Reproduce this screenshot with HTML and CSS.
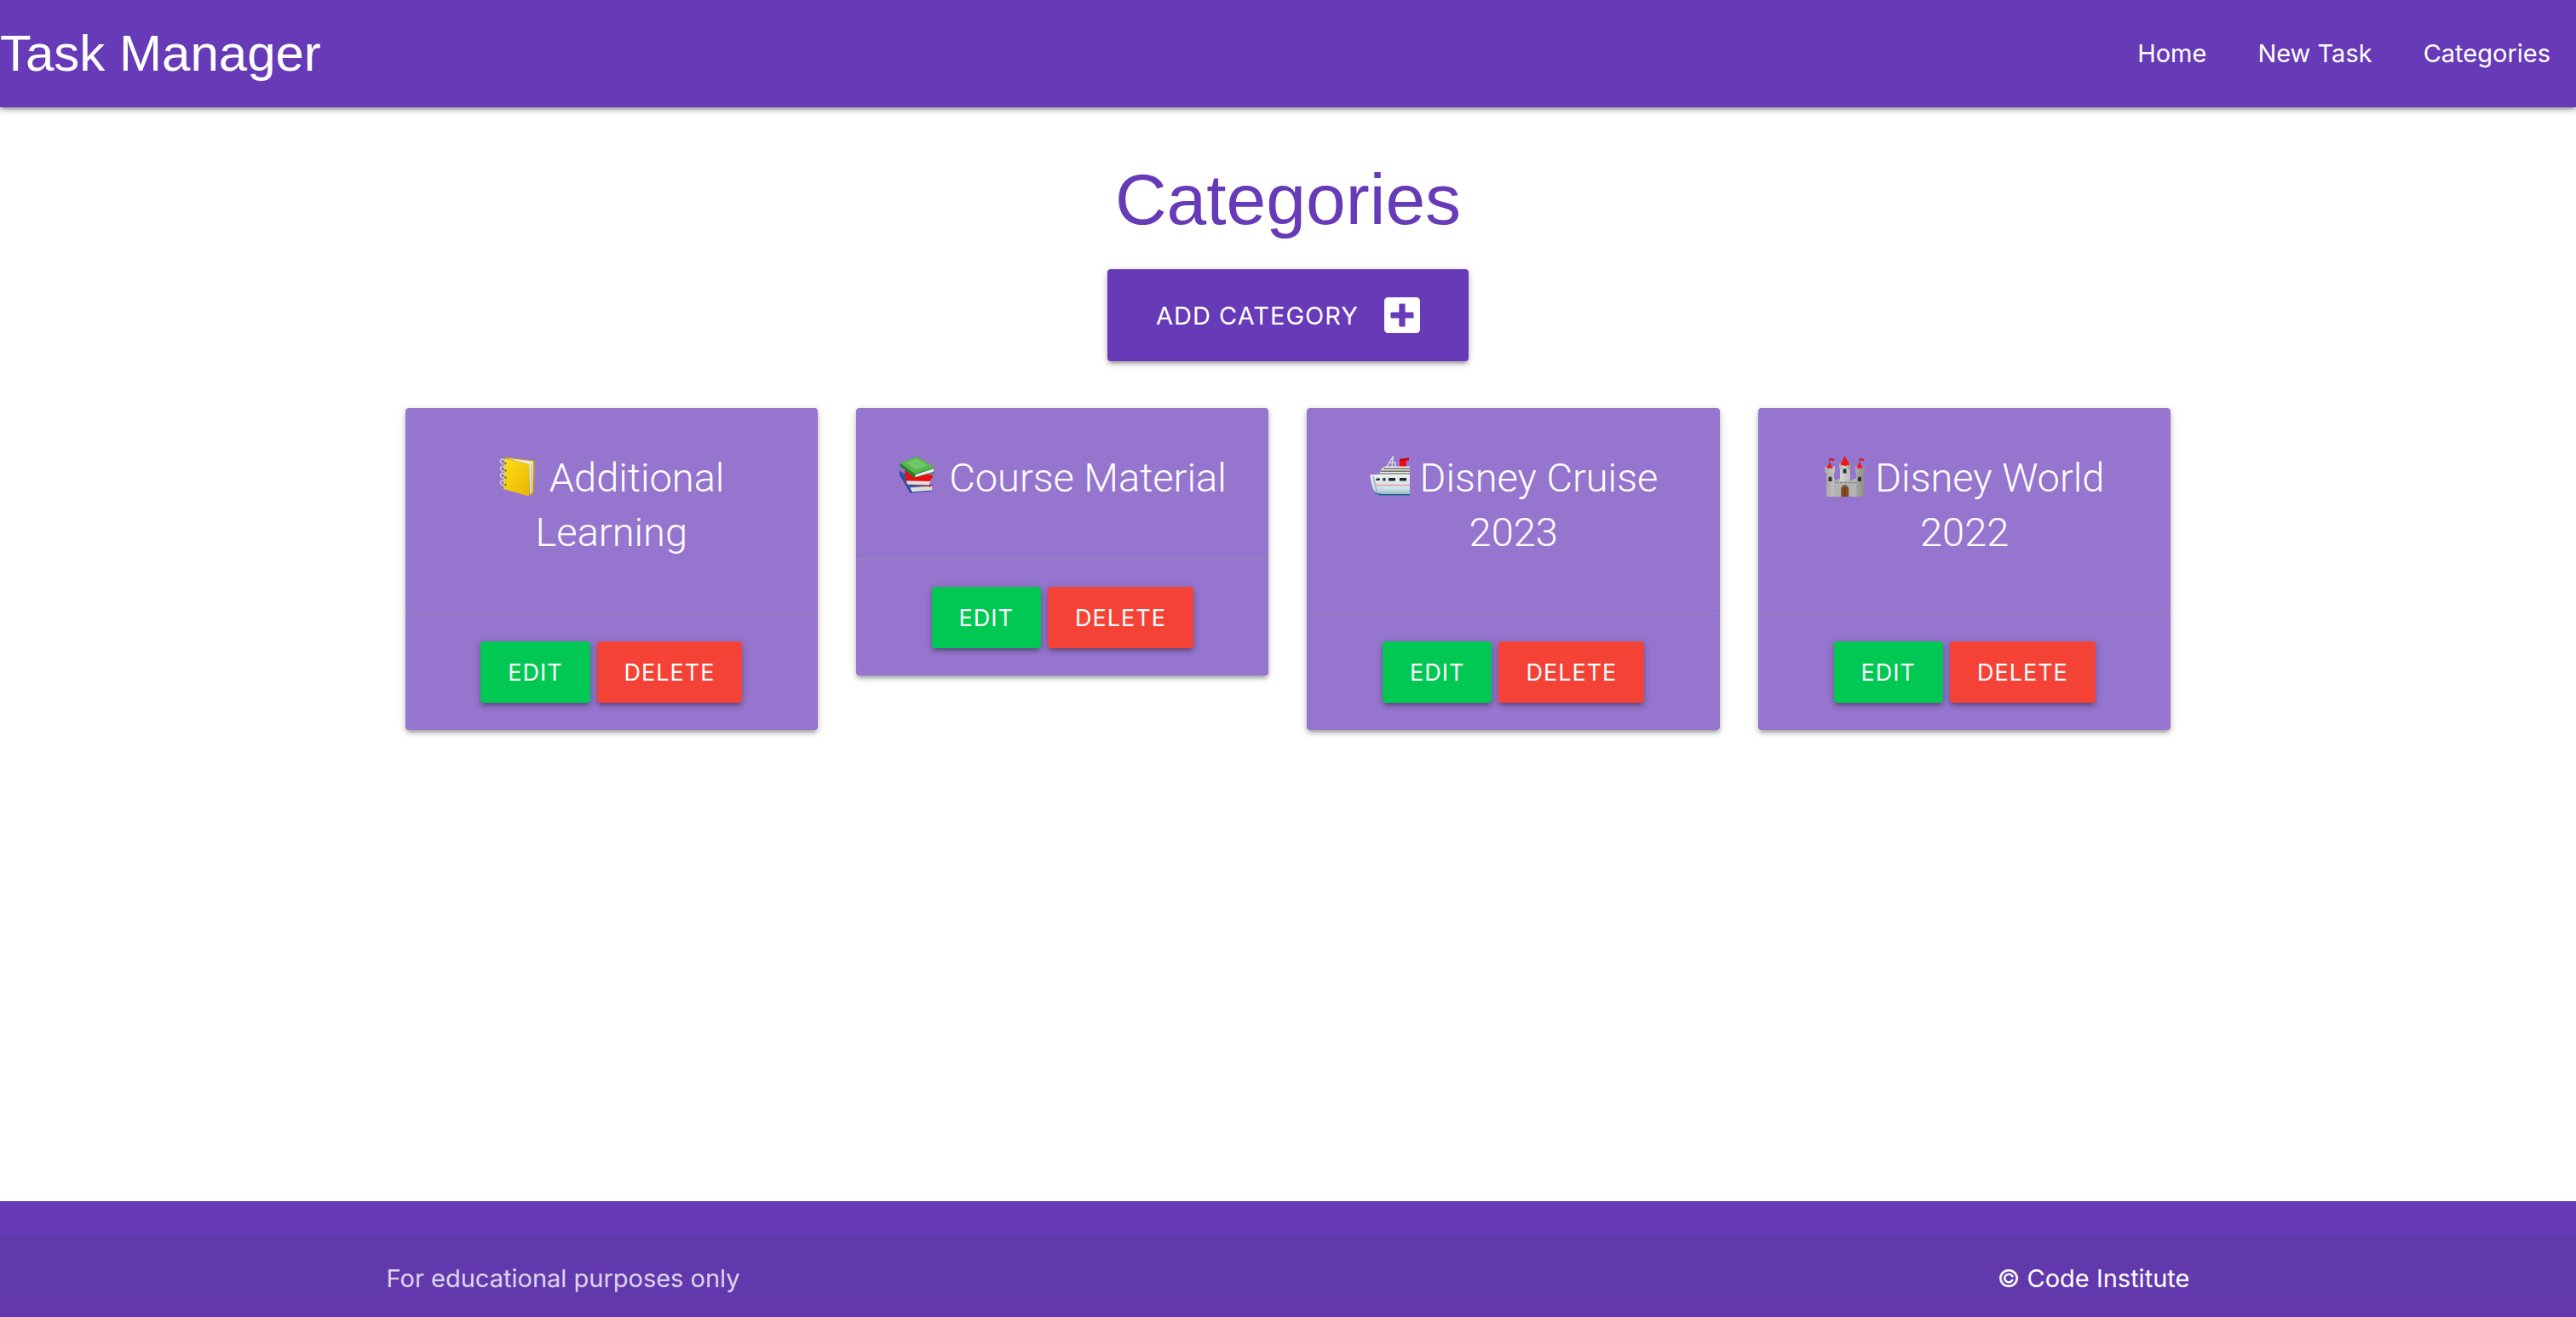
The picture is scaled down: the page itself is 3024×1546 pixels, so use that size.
FILE: index.html
```html
<!DOCTYPE html>
<html lang="en">
<head>
  <meta charset="utf-8">
  <meta name="viewport" content="width=device-width, initial-scale=1">
  <title>Task Manager</title>
  <link rel="stylesheet" href="styles.css">
</head>
<body>
  <header class="navbar">
    <a class="brand" href="#">Task Manager</a>
    <nav class="nav-links">
      <a href="#">Home</a>
      <a href="#">New Task</a>
      <a href="#">Categories</a>
    </nav>
  </header>

  <main class="container">
    <h1 class="page-title">Categories</h1>
    <button class="btn btn-large" type="button">Add Category
      <svg class="btn-icon" viewBox="0 0 42 42" aria-hidden="true"><path fill="currentColor" fill-rule="evenodd" d="M4.500 0h33A4.500 4.500 0 0 1 42 4.500v33a4.500 4.500 0 0 1-4.500 4.500h-33A4.500 4.500 0 0 1 0 37.500v-33A4.500 4.500 0 0 1 4.500 0zM18.400 7.500a1 1 0 0 0-1 1v8.900H8.500a1 1 0 0 0-1 1v5.200a1 1 0 0 0 1 1h8.900v8.900a1 1 0 0 0 1 1h5.200a1 1 0 0 0 1-1v-8.900h8.900a1 1 0 0 0 1-1v-5.200a1 1 0 0 0-1-1h-8.900V8.500a1 1 0 0 0-1-1z"/></svg>
    </button>

    <section class="cards">
      <article class="card">
        <div class="card-content">
          <h2 class="card-title"><svg class="emoji" viewBox="0 0 48 48" aria-hidden="true">
            <defs><linearGradient id="cover" x1="0" y1="0" x2="1" y2="1"><stop offset="0" stop-color="#ffe01a"/><stop offset="1" stop-color="#e8b400"/></linearGradient></defs>
            <path d="M7 1.500 43 5.500 42 43 38 47z" fill="#c89a00"/>
            <path d="M8 2.500 41 6.500 40 43 37 45 36 10z" fill="#e6ebe9"/>
            <path d="M38.500 8.500V44" stroke="#a9b2b5" stroke-width="1"/>
            <path d="M7.500 3.500 35 9.500q1.500.5 1.500 2L36 47.500 6 39z" fill="url(#cover)"/>
            <g fill="none" stroke="#c9ccc9" stroke-width="1.600"><path d="M8 5.500C4 2.500 1 5.500 3 8s4 2.500 5 1"/><path d="M8 14C4 11 1 14 3 16.500s4 2.500 5 1"/><path d="M8 22C4 19 1 22 3 24.500s4 2.500 5 1"/><path d="M8 30.500C4 27.500 1 30.500 3 33s4 2.500 5 1"/></g>
            <g fill="#8a6a08"><circle cx="8.500" cy="9" r="1.200"/><circle cx="8.500" cy="17.500" r="1.200"/><circle cx="8.500" cy="25.500" r="1.200"/><circle cx="8.500" cy="34" r="1.200"/></g>
          </svg> Additional Learning</h2>
        </div>
        <div class="card-action">
          <button class="btn btn-edit" type="button">Edit</button>
          <button class="btn btn-delete" type="button">Delete</button>
        </div>
      </article>

      <article class="card">
        <div class="card-content">
          <h2 class="card-title"><svg class="emoji" viewBox="0 0 48 48" aria-hidden="true">
            <path d="M1 17.500 1 22 13.700 44 39.500 41.500 39 40 15 42 12 37.500 40 35 12 24z" fill="#3c55a8"/>
            <path d="M14 37.500 39 35.500 39 40.500 15 42.500z" fill="#dcdedc"/>
            <path d="M1 17.500 12 37 16 42.500 14 44 1 22z" fill="#2f4692"/>
            <path d="M7 16.500 40 23 36 30 9 29z" fill="#e80d10"/>
            <path d="M7 16.500 9 29 8.500 33 37 36.500 40 34 36 35 10 33 10 29z" fill="#d00a10"/>
            <path d="M9 29.500 37 29.500 36 34.500 10 33.500z" fill="#e4e0de"/>
            <path d="M12 24 25 27 39 22.500 40 25 36 30 12 29z" fill="#f00c10"/>
            <path d="M1.500 8.500 21.500 1 42.500 13.500 19 21.500z" fill="#55b64c"/>
            <path d="M8 8 21.500 3 35 11.500 20 16.500z" fill="#6fc765"/>
            <path d="M1.500 8.500 19 21.500 18 25.800 1.500 12z" fill="#23832a"/>
            <path d="M18 25.800 19 21 42.500 13.500 42 15 20 22.500 20 24.500 42 18.500V20z" fill="#2f9434"/>
            <path d="M19.500 22.300 41.500 15 40.500 18.800 20 25z" fill="#e9ebe8"/>
          </svg> Course Material</h2>
        </div>
        <div class="card-action">
          <button class="btn btn-edit" type="button">Edit</button>
          <button class="btn btn-delete" type="button">Delete</button>
        </div>
      </article>

      <article class="card">
        <div class="card-content">
          <h2 class="card-title"><svg class="emoji" viewBox="0 0 48 48" aria-hidden="true">
            <defs><linearGradient id="hull" x1="0" y1="0" x2="0" y2="1"><stop offset="0" stop-color="#eef0f1"/><stop offset=".7" stop-color="#cfdfe6"/><stop offset="1" stop-color="#86b4c4"/></linearGradient></defs>
            <path d="M21 13 28.500.5 27 13M24 8h7v5" fill="none" stroke="#d6d6dc" stroke-width="1.500"/>
            <path d="M36 4 47 2.500V5.500L44 6V14H36z" fill="#f00a10"/>
            <path d="M36 4 47 2.500V4L36 7z" fill="#c40008"/>
            <path d="M16 14 20 12.500H48V23H11z" fill="#f1f1ee"/>
            <path d="M17 15.200H48M14 18.200H48M12 21H48" stroke="#4c4f48" stroke-width="1.200"/>
            <path d="M1.300 22.300 10 22H48V46H14Q7 45 5 39 2 30 1.300 22.300z" fill="url(#hull)"/>
            <path d="M5 24.500 9 41" stroke="#8db6c1" stroke-width="1.500"/>
            <path d="M6.500 41.500Q9 44.500 15 45H48V46.500H14Q8 45.500 6.500 41.500z" fill="#1f6389"/>
            <path d="M8 34.500H48" stroke="#e88b8d" stroke-width="1"/>
            <g fill="#20262a"><path d="M9 26.500h4l-.5 2.500H8z"/><path d="M16 26h1.500v3.500H16zM18 26h1.500v3.500H18zM23 26h8v3.500h-8zM36 26h8v3.500h-8z"/></g>
          </svg> Disney Cruise 2023</h2>
        </div>
        <div class="card-action">
          <button class="btn btn-edit" type="button">Edit</button>
          <button class="btn btn-delete" type="button">Delete</button>
        </div>
      </article>

      <article class="card">
        <div class="card-content">
          <h2 class="card-title"><svg class="emoji" viewBox="0 0 48 48" aria-hidden="true">
            <defs><linearGradient id="stone" x1="0" y1="0" x2="1" y2="0"><stop offset="0" stop-color="#a9aaa8"/><stop offset=".4" stop-color="#d4d5d2"/><stop offset="1" stop-color="#8f908e"/></linearGradient></defs>
            <path d="M9 27h3v2h3v-2h3v2h3v-2h3v2h3v-2h3v2h3v-2h4v21H9z" fill="#b3b4b1"/>
            <path d="M9 31.500h29" stroke="#858683" stroke-width="1.500" stroke-dasharray="2 1"/>
            <path d="M18 14h12v16H18zM2 20h9v28H2zM37 20h9v28h-9z" fill="url(#stone)"/>
            <path d="M17 9h3v2h2.500V9h3v2H28V9h3v5.500l-2 2H19l-2-2z" fill="url(#stone)"/>
            <path d="M0 12.500h2.500v2h2v-2h3v2h2v-2H12v6.500l-2 2H2l-2-2zM36 12.500h2.500v2h2v-2h3v2h2v-2H47.500v6.500l-2 2h-8l-1.500-2z" fill="url(#stone)"/>
            <path d="M18.500 10.500 23.700 0 29.500 10.500 24 12zM2.500 14 5.700 7.500 9.500 14 6 15zM37.500 14 41 7.500 44.500 14 41 15z" fill="#ef1712"/>
            <path d="M5.700 8.500V3M41 8.500V3" stroke="#70464d" stroke-width=".8"/>
            <path d="M6 2.500 9 3.500 12 3.500 10.500 5 12 6.500 8.500 5.500 6 6zM41 2.500 44 3.500 47 3.500 45.500 5 47 6.500 43.500 5.500 41 6z" fill="#cb202c"/>
            <path d="M4.500 30v-3.500a2 2 0 0 1 4 0V30zM39 30v-3.500a2 2 0 0 1 4 0V30zM21.500 20.500V17a2 2 0 0 1 4 0v3.500z" fill="#303333"/>
            <path d="M19 48V39a4.700 4.700 0 0 1 9.400 0v9z" fill="#696762"/>
            <path d="M20 48V39.500a3.700 3.700 0 0 1 7.400 0V48z" fill="#8b4a18"/>
            <path d="M23.700 36v12" stroke="#65310e" stroke-width=".8"/>
          </svg> Disney World 2022</h2>
        </div>
        <div class="card-action">
          <button class="btn btn-edit" type="button">Edit</button>
          <button class="btn btn-delete" type="button">Delete</button>
        </div>
      </article>
    </section>
  </main>

  <footer class="footer">
    <div class="footer-copyright">
      <div class="container footer-row">
        <span>For educational purposes only</span>
        <a class="footer-link" href="#">© Code Institute</a>
      </div>
    </div>
  </footer>
</body>
</html>
```

FILE: styles.css
```css
:root {
  --purple: #673ab7;
  --purple-light: #9575cd;
  --shadow: 0 4px 4px 0 rgba(0, 0, 0, .14), 0 6px 2px -4px rgba(0, 0, 0, .12), 0 2px 10px 0 rgba(0, 0, 0, .2);
  --display-font: "Liberation Sans", Arial, sans-serif;
}

* {
  box-sizing: border-box;
}

body {
  margin: 0;
  min-height: 100vh;
  display: flex;
  flex-direction: column;
  background: #fff;
  font-family: Inter, "Open Sans", sans-serif;
  font-size: 29px;
  line-height: 45px;
}

a {
  color: inherit;
  text-decoration: none;
}

.container {
  width: 70%;
  margin: 0 auto;
}

/* Top bar */
.navbar {
  display: flex;
  justify-content: space-between;
  align-items: center;
  background: var(--purple);
  color: #fff;
  box-shadow: var(--shadow);
  line-height: 126px;
}

.brand {
  font-family: var(--display-font);
  font-size: 60px;
}

.nav-links {
  display: flex;
}

.nav-links a {
  padding: 0 30px;
}

/* Page heading and main action */
main {
  flex: 1;
  display: flex;
  flex-direction: column;
  align-items: center;
}

.page-title {
  margin: 60px 0 33px;
  color: var(--purple);
  font-family: var(--display-font);
  font-size: 84px;
  font-weight: 400;
  line-height: 97px;
}

.btn {
  height: 72px;
  padding: 0 32px;
  border: 0;
  border-radius: 4px;
  background: var(--purple);
  box-shadow: var(--shadow);
  color: #fff;
  font-family: inherit;
  font-size: 27px;
  letter-spacing: 1px;
  text-transform: uppercase;
  cursor: pointer;
}

.btn-large {
  display: flex;
  align-items: center;
  gap: 30px;
  height: 108px;
  padding: 0 57px;
  font-size: 29px;
}

.btn-icon {
  width: 42px;
  height: 42px;
}

.btn-edit {
  background: #00c853;
}

.btn-delete {
  background: #f44336;
}

/* Category cards */
.cards {
  width: 100%;
  display: grid;
  grid-template-columns: repeat(4, 1fr);
  align-items: start;
  gap: 45px;
  margin: 55px 0 45px;
  padding: 0 22px;
}

.card {
  border-radius: 4px;
  background: var(--purple-light);
  box-shadow: var(--shadow);
  color: #fff;
  text-align: center;
}

.card-content {
  padding: 50px 40px 62px;
}

.card-title {
  margin: 0;
  font-family: Roboto, sans-serif;
  font-size: 47px;
  font-weight: 300;
  line-height: 64px;
}

.emoji {
  width: 48px;
  height: 48px;
  vertical-align: -6px;
}

.card-action {
  display: flex;
  justify-content: center;
  gap: 8px;
  padding: 32px 40px;
  border-top: 2px solid rgba(160, 160, 160, .2);
}

/* Footer */
.footer {
  padding-top: 40px;
  background: var(--purple);
  color: #fff;
}

.footer-copyright {
  padding: 28px 0 23px;
  background: rgba(51, 51, 51, .08);
}

.footer-row {
  display: flex;
  justify-content: space-between;
  color: rgba(255, 255, 255, .8);
}

.footer-link {
  color: #fff;
}
```
